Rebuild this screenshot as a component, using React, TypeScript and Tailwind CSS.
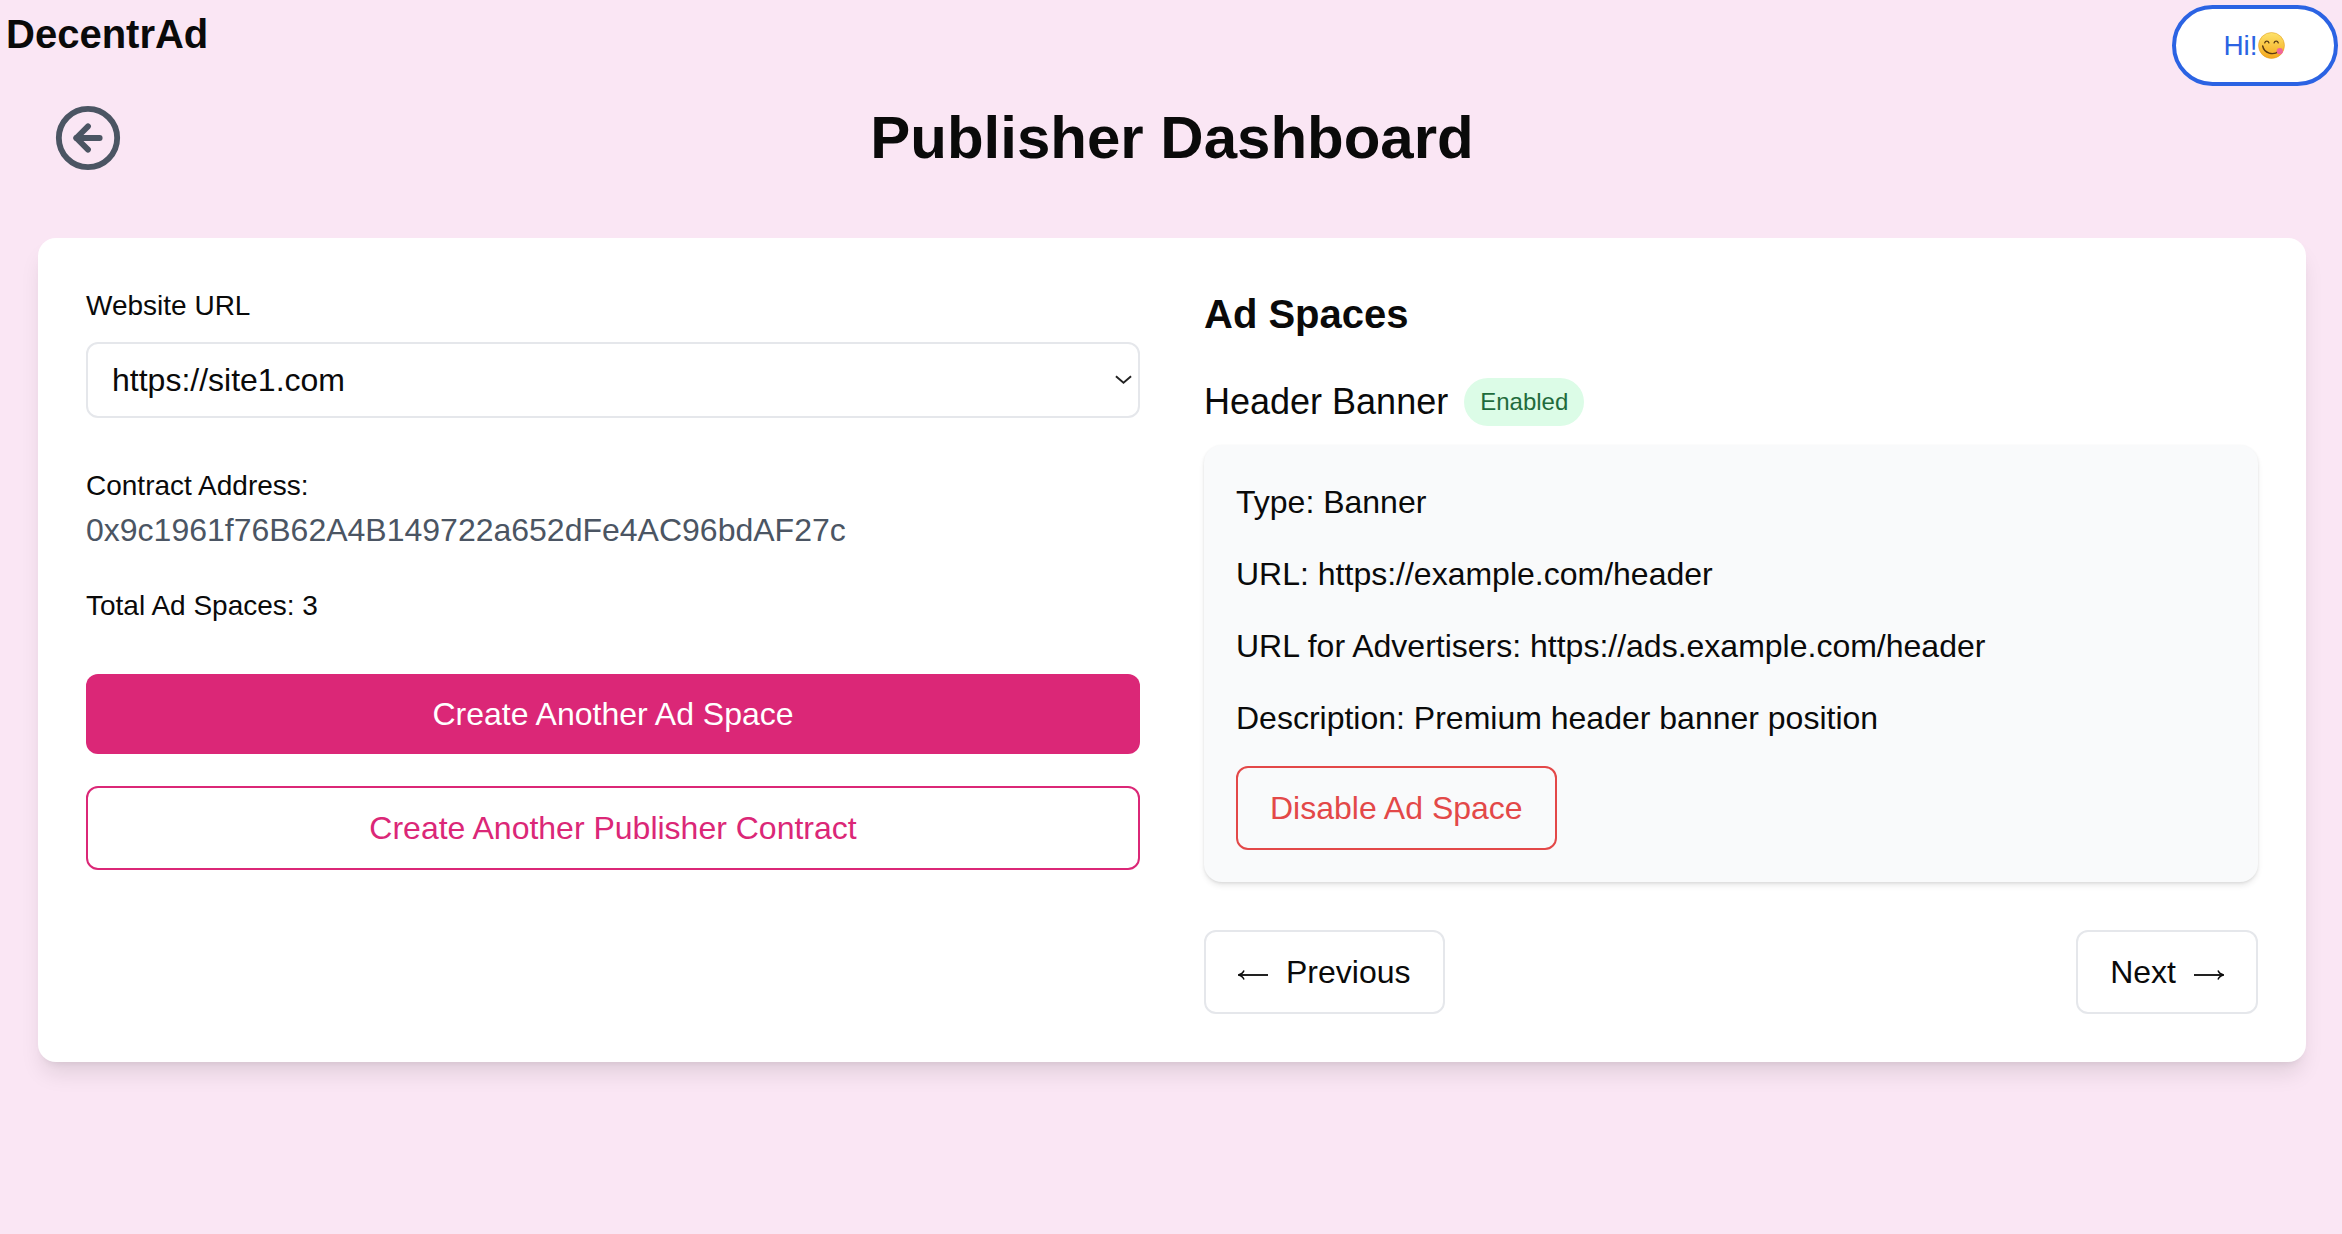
import { CircleArrowLeft } from 'lucide-react';

const FONT = "font-['Liberation_Sans',Arial,sans-serif]";

// Tongue-out smiley, no emoji font in the sandbox
function Smiley() {
  return (
    <svg viewBox="0 0 26 26" className="w-[27px] h-[27px] shrink-0">
      <defs>
        <linearGradient id="face" x1="0" y1="0" x2="0" y2="1">
          <stop offset="0" stopColor="#fde36b" />
          <stop offset="1" stopColor="#f5a81c" />
        </linearGradient>
      </defs>
      <circle cx="13" cy="13" r="12.500" fill="url(#face)" stroke="#e09a1a" strokeWidth="0.500" />
      <path d="M6.500 10.500c.6-2.200 3.400-2.200 4 0M15.500 10.500c.6-2.200 3.400-2.200 4 0" fill="none" stroke="#5a3a12" strokeWidth="1.300" strokeLinecap="round" />
      <path d="M4.500 13.500c1.500 7 10 9.500 15.500 5" fill="none" stroke="#5a3a12" strokeWidth="1.400" strokeLinecap="round" />
      <circle cx="21" cy="18.500" r="3" fill="#f0669a" />
    </svg>
  );
}

// Thin text-style arrow, Liberation's own arrow glyph is too small
function Arrow({ left }: { left?: boolean }) {
  return (
    <svg viewBox="0 0 30 12" className={`w-[30px] h-[12px] mt-[6px] shrink-0 ${left ? 'rotate-180' : ''}`}>
      <path d="M0 6h28" stroke="#0a0a0a" strokeWidth="1.800" />
      <path d="M24 1.500c.8 2.200 2.400 3.700 6 4.500-3.600.8-5.200 2.300-6 4.500" fill="none" stroke="#0a0a0a" strokeWidth="1.500" />
    </svg>
  );
}

export default function App() {
  return (
    <div className={`${FONT} min-h-screen bg-[#fae6f4] text-[#0a0a0a]`}>
      {/* Top bar */}
      <header className="flex justify-between items-start h-[90px] pl-[6px] pr-[4px] pt-[5px]">
        <div className="text-[40px] leading-[58px] font-bold">DecentrAd</div>
        <button className="flex items-center justify-center w-[166px] h-[81px] pr-[2px] rounded-full bg-white border-[4px] border-[#2b63e3] text-[#2b63e3] text-[28px]">
          Hi!
          <Smiley />
        </button>
      </header>

      {/* Title row */}
      <div className="relative h-[96px] flex items-center justify-center pl-[2px]">
        <CircleArrowLeft className="absolute left-[53px] top-[13px] w-[70px] h-[70px] text-[#4b5563]" strokeWidth={2} />
        <h1 className="text-[60px] leading-[96px] font-bold">Publisher Dashboard</h1>
      </div>

      {/* Main card */}
      <main className="ml-[38px] mr-[36px] mt-[52px] grid grid-cols-2 gap-[64px] p-[48px] bg-white rounded-[18px] shadow-[0_15px_22px_-4px_rgba(0,0,0,0.1),0_6px_9px_-6px_rgba(0,0,0,0.1)]">
        <section>
          <label className="block text-[28px] leading-[36px] mt-[2px]">Website URL</label>
          <div className="relative mt-[18px]">
            <select className="block w-full h-[76px] appearance-none bg-white px-[24px] border-[2px] border-[#e5e7eb] rounded-[12px] text-[32px]">
              <option>https://site1.com</option>
            </select>
            <svg viewBox="0 0 18 10" className="absolute right-[8px] top-[33px] w-[17px] h-[10px]">
              <path d="M1 1l8 7 8-7" fill="none" stroke="#222" strokeWidth="2" />
            </svg>
          </div>

          <p className="mt-[50px] text-[28px] leading-[36px]">Contract Address:</p>
          <p className="mt-[2px] text-[32px] leading-[48px] text-[#4b5563]">0x9c1961f76B62A4B149722a652dFe4AC96bdAF27c</p>
          <p className="mt-[32px] text-[28px] leading-[40px]">Total Ad Spaces: 3</p>

          <button className="block w-full mt-[48px] h-[80px] rounded-[12px] bg-[#db2777] text-white text-[32px]">
            Create Another Ad Space
          </button>
          <button className="block w-full mt-[32px] h-[84px] rounded-[12px] border-[2px] border-[#db2777] text-[#db2777] text-[32px]">
            Create Another Publisher Contract
          </button>
        </section>

        <section>
          <h2 className="text-[40px] leading-[56px] font-bold">Ad Spaces</h2>
          <div className="flex items-center gap-[16px] mt-[36px]">
            <h3 className="text-[36px] leading-[48px]">Header Banner</h3>
            <span className="px-[16px] h-[48px] flex items-center rounded-full bg-[#dcfce7] text-[#1f6b3c] text-[24px]">Enabled</span>
          </div>
          <div className="mt-[19px] px-[32px] pt-[33px] pb-[32px] bg-[#f9fafb] rounded-[18px] shadow-[0_4px_6px_-1px_rgba(0,0,0,0.1),0_1px_3px_rgba(0,0,0,0.08)] text-[32px]">
            <p className="leading-[48px]">Type: Banner</p>
            <p className="leading-[48px] mt-[24px]">URL: https://example.com/header</p>
            <p className="leading-[48px] mt-[24px]">URL for Advertisers: https://ads.example.com/header</p>
            <p className="leading-[48px] mt-[24px]">Description: Premium header banner position</p>
            <button className="block mt-[24px] h-[84px] px-[32px] rounded-[12px] border-[2px] border-[#e34848] text-[#e34848]">
              Disable Ad Space
            </button>
          </div>
          <div className="flex justify-between mt-[48px] text-[32px]">
            <button className="flex items-center gap-[18px] h-[84px] px-[32px] rounded-[12px] border-[2px] border-[#e5e7eb]">
              <Arrow left /> Previous
            </button>
            <button className="flex items-center gap-[18px] h-[84px] px-[32px] rounded-[12px] border-[2px] border-[#e5e7eb]">
              Next <Arrow />
            </button>
          </div>
        </section>
      </main>
    </div>
  );
}
